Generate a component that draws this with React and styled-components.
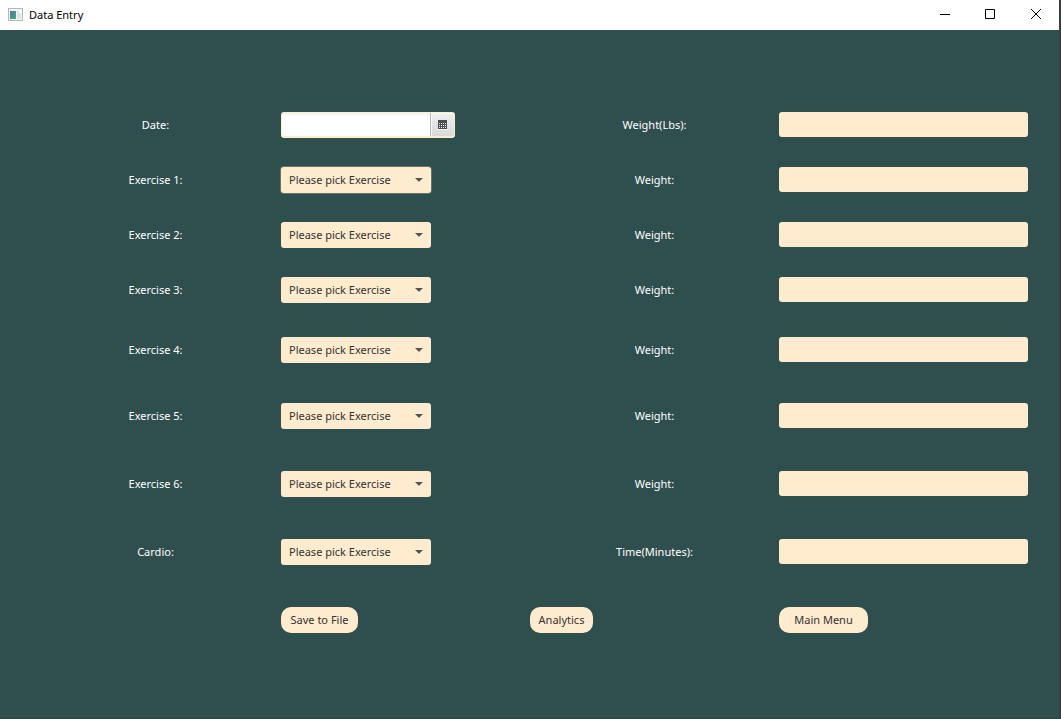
import React, { useState } from "react";
import styled, { createGlobalStyle } from "styled-components";

const GlobalStyle = createGlobalStyle`
  * { box-sizing: border-box; }
  body { margin: 0; background: #2f4f4f; }
  body, button, input, select {
    font-family: "Noto Sans", "Open Sans", sans-serif;
    font-size: 11px;
    line-height: 16px;
  }
`;

const Window = styled.div`
  min-height: 100vh;
  display: flex;
  flex-direction: column;
  background: #2f4f4f;
  border-right: 2px solid #3a3d3b;
  border-bottom: 1px solid #2a4444;
`;

const TitleBar = styled.header`
  display: flex;
  align-items: center;
  height: 30px;
  padding-left: 8px;
  background: #fff;
`;

const Title = styled.h1`
  flex: 1;
  margin: 0 0 0 6px;
  font-size: 11px;
  line-height: 16px;
  font-weight: 400;
  color: #000;
`;

const WindowButton = styled.button`
  display: flex;
  align-items: center;
  justify-content: center;
  width: 46px;
  height: 30px;
  padding: 0 0 2px;
  border: 0;
  background: none;
`;

const Form = styled.form`
  padding: 82px 31px 40px 32px;
`;

const Row = styled.div`
  display: grid;
  grid-template-columns: repeat(4, minmax(0, 1fr));
  align-items: start;
  min-height: 26px;
  margin-bottom: ${(p) => p.$space}px;
`;

const Label = styled.label`
  line-height: 26px;
  text-align: center;
  color: #fff;
`;

const RowLabel = styled(Label)`
  padding-right: 2px;
`;

const Field = styled.input`
  width: 100%;
  height: 25px;
  padding: 0 8px;
  border: 0;
  border-radius: 3px;
  background: #ffebcd;
  color: #333;
`;

const DateBox = styled.div`
  display: flex;
  width: 174px;
  height: 26px;
  padding: 1px;
  border-radius: 3px;
  background: #ffebcd;
`;

const DateField = styled.input`
  flex: 1;
  min-width: 0;
  height: 23px;
  padding: 0 8px;
  border: 0;
  border-radius: 2px 0 0 2px;
  background: linear-gradient(#f0f0f0, #fff 4px);
  color: #333;
`;

const DateButton = styled.button`
  display: flex;
  align-items: center;
  justify-content: center;
  width: 24px;
  height: 23px;
  padding: 1px 0 0;
  border: 0;
  border-left: 1px solid #b5b5b5;
  border-radius: 0 2px 2px 0;
  background: linear-gradient(#efefef, #d9d9d9);
  box-shadow: inset 1px 1px 0 #f8f8f8;
`;

const SelectBox = styled.div`
  display: grid;
  align-items: center;
  width: 150px;
  height: 26px;
  border-radius: 3px;
  background: #ffebcd;
  box-shadow: ${(p) => (p.$focused ? "0 0 0 1px #66756b" : "none")};

  > * { grid-area: 1 / 1; }
  > svg { justify-self: end; margin-right: 8px; pointer-events: none; }
`;

const Select = styled.select`
  appearance: none;
  width: 100%;
  height: 26px;
  padding: 0 24px 0 8px;
  border: 0;
  border-radius: 3px;
  background: transparent;
  color: #333;
`;

const ActionButton = styled.button`
  grid-column: ${(p) => p.$column};
  justify-self: start;
  min-width: ${(p) => p.$width}px;
  height: 26px;
  padding: 0 6px;
  border: 0;
  border-radius: 10px;
  background: #ffebcd;
  color: #333;
  white-space: nowrap;
`;

const AppIconDrawing = styled.svg`
  margin-bottom: 2px;
`;

const AppIcon = () => (
  <AppIconDrawing width="15" height="13" viewBox="0 0 15 13" aria-hidden="true">
    <defs>
      <linearGradient id="pane" x1="0" y1="0" x2="1" y2="1">
        <stop offset="0" stopColor="#4579a5" />
        <stop offset="1" stopColor="#4cab72" />
      </linearGradient>
    </defs>
    <rect x="0.5" y="0.5" width="14" height="12" fill="#f3f3f5" stroke="#b4b6bd" />
    <rect x="2" y="3" width="6" height="8" fill="url(#pane)" />
    <rect x="9" y="3" width="4" height="8" fill="#e1e5e5" />
    <rect x="11" y="3" width="2" height="2" fill="#fff" />
  </AppIconDrawing>
);

const CalendarIcon = () => (
  <svg width="9" height="10" viewBox="0 0 9 10" aria-hidden="true" shapeRendering="crispEdges">
    <path d="M0 9h9v1H0z" fill="#f8f8f8" />
    <path d="M0 0h9v9H0z" fill="#4d4d4d" />
    <path d="M1 3h1v1H1zm2 0h1v1H3zm2 0h1v1H5zm2 0h1v1H7zM1 5h1v1H1zm2 0h1v1H3zm2 0h1v1H5zm2 0h1v1H7zM1 7h1v1H1zm2 0h1v1H3zm2 0h1v1H5zm2 0h1v1H7z" fill="#f0f0f0" />
  </svg>
);

const Arrow = () => (
  <svg width="8" height="5" viewBox="0 0 8 5" aria-hidden="true">
    <path d="M0 1h8L4 5z" fill="#fff8ec" />
    <path d="M0 0h8L4 4z" fill="#575350" />
  </svg>
);

const ROWS = [
  { id: "exercise1", label: "Exercise 1:", measure: "Weight:", space: 29, focused: true },
  { id: "exercise2", label: "Exercise 2:", measure: "Weight:", space: 29 },
  { id: "exercise3", label: "Exercise 3:", measure: "Weight:", space: 34 },
  { id: "exercise4", label: "Exercise 4:", measure: "Weight:", space: 40 },
  { id: "exercise5", label: "Exercise 5:", measure: "Weight:", space: 42 },
  { id: "exercise6", label: "Exercise 6:", measure: "Weight:", space: 42 },
  { id: "cardio", label: "Cardio:", measure: "Time(Minutes):", space: 42 },
];

export default function App() {
  const [date, setDate] = useState("");
  const today = () => setDate(new Date().toLocaleDateString("en-US"));

  return (
    <Window>
      <GlobalStyle />
      <TitleBar>
        <AppIcon />
        <Title>Data Entry</Title>
        <WindowButton aria-label="Minimize">
          <svg width="12" height="12" aria-hidden="true"><path d="M2 6.5h10" stroke="#000" /></svg>
        </WindowButton>
        <WindowButton aria-label="Maximize">
          <svg width="10" height="10" aria-hidden="true"><path d="M.5.5h9v9h-9z" fill="none" stroke="#000" /></svg>
        </WindowButton>
        <WindowButton aria-label="Close">
          <svg width="10" height="10" aria-hidden="true"><path d="M0 0l10 10M10 0L0 10" stroke="#000" /></svg>
        </WindowButton>
      </TitleBar>
      <Form onSubmit={(e) => e.preventDefault()}>
        <Row $space={29}>
          <RowLabel htmlFor="date">Date:</RowLabel>
          <DateBox>
            <DateField id="date" value={date} onChange={(e) => setDate(e.target.value)} />
            <DateButton type="button" aria-label="Pick a date" onClick={today}>
              <CalendarIcon />
            </DateButton>
          </DateBox>
          <Label htmlFor="bodyweight">Weight(Lbs):</Label>
          <Field id="bodyweight" />
        </Row>
        {ROWS.map((row) => (
          <Row key={row.id} $space={row.space}>
            <RowLabel htmlFor={row.id}>{row.label}</RowLabel>
            <SelectBox $focused={row.focused}>
              <Select id={row.id}>
                <option>Please pick Exercise</option>
              </Select>
              <Arrow />
            </SelectBox>
            <Label htmlFor={`${row.id}-amount`}>{row.measure}</Label>
            <Field id={`${row.id}-amount`} />
          </Row>
        ))}
        <Row $space={0}>
          <ActionButton type="submit" $column={2} $width={77}>Save to File</ActionButton>
          <ActionButton type="button" $column={3} $width={63}>Analytics</ActionButton>
          <ActionButton type="button" $column={4} $width={89}>Main Menu</ActionButton>
        </Row>
      </Form>
    </Window>
  );
}
